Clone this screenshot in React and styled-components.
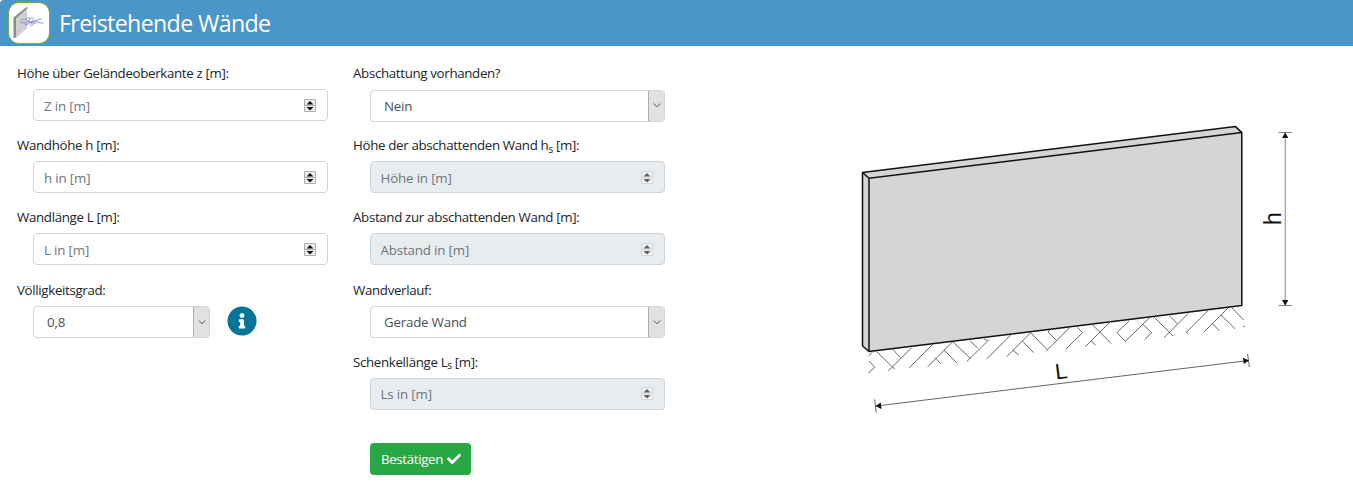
import React from "react";
import styled, { createGlobalStyle, css } from "styled-components";
import { FaCheck, FaInfoCircle } from "react-icons/fa";

const GlobalStyle = createGlobalStyle`
  *, *::before, *::after { box-sizing: border-box; }
  body {
    margin: 0;
    background: #fff;
    color: #212529;
    font-family: "Segoe UI", "Open Sans", "Noto Sans", sans-serif;
    font-size: 13.3px;
    line-height: 20px;
    letter-spacing: -0.33px;
  }
`;

const Page = styled.div`
  height: 504px;
  overflow: hidden;
`;

const Header = styled.header`
  display: flex;
  align-items: center;
  height: 46px;
  padding: 0 9px 1px 8px;
  gap: 9px;
  background: #4a96c9;
  border-top-left-radius: 4px;
`;

const LogoFrame = styled.span`
  display: flex;
  width: 42px;
  height: 42px;
  border: 1.5px solid #76b041;
  border-radius: 11px;
  background: #fff;
`;

const Title = styled.h1`
  margin: 1px 0 0;
  color: #fff;
  font-size: 23.2px;
  font-weight: 400;
  line-height: 32px;
  letter-spacing: -0.65px;
  white-space: nowrap;
`;

const Main = styled.main`
  display: flex;
`;

const Column = styled.section`
  display: flex;
  flex-direction: column;
  width: ${(p) => p.$width}px;
  padding: 17px 0 0 17px;
`;

const Field = styled.div`
  height: 72.2px;
  padding-left: ${(p) => p.$indent || 16}px;
`;

const Label = styled.label`
  display: block;
  height: 27px;
  margin-left: -${(p) => p.$indent || 16}px;
  white-space: nowrap;

  sub {
    position: relative;
    bottom: -0.25em;
    font-size: 75%;
    line-height: 0;
    vertical-align: baseline;
  }
`;

const Row = styled.div`
  display: flex;
  align-items: center;
  gap: 17px;
  margin-top: -0.4px;
`;

const controlBox = css`
  display: flex;
  align-items: center;
  width: ${(p) => p.$width || 295}px;
  height: 32px;
  border: 1px solid #ced4da;
  border-radius: 4px;
  background: #fff;
`;

const NumberBox = styled.div`
  ${controlBox}
  margin-top: -1px;
  padding: 0 11px 0 ${(p) => (p.$disabled ? 9.5 : 10)}px;
  background: ${(p) => (p.$disabled ? "#e9ecef" : "#fff")};
`;

const NumberInput = styled.input`
  flex: 1;
  min-width: 0;
  padding: 1px 0 0;
  border: 0;
  outline: 0;
  background: transparent;
  color: #495057;
  font: inherit;
  letter-spacing: -0.15px;

  &::placeholder {
    color: #6c757d;
    opacity: 1;
  }
`;

const Spinner = styled.svg`
  width: 12px;
  height: 13px;
  flex: none;
`;

const SelectBox = styled.div`
  ${controlBox}
  padding-left: 13px;
  overflow: hidden;
  color: #495057;
  letter-spacing: -0.2px;
`;

const SelectValue = styled.span`
  flex: 1;
`;

const SelectArrow = styled.span`
  display: flex;
  align-items: center;
  justify-content: center;
  width: 17px;
  height: 32px;
  margin: -1px -1px -1px 0;
  border: 1px solid #adadad;
  background: #e1e1e1;
`;

const InfoIcon = styled(FaInfoCircle)`
  width: 30px;
  height: 30px;
  margin-top: -2px;
  color: #057499;
`;

const Submit = styled.button`
  display: flex;
  align-items: center;
  gap: 4px;
  width: 101px;
  height: 32px;
  margin: 19px 0 0 17px;
  padding: 0 0 0 11px;
  border: 0;
  border-radius: 4px;
  background: #28a745;
  color: #fff;
  font: inherit;
  letter-spacing: -0.35px;
  white-space: nowrap;
`;

const Diagram = styled.svg`
  width: 460px;
  height: 310px;
  margin: 64px 0 0 173px;
  flex: none;
`;

function Logo() {
  return (
    <LogoFrame>
      <svg width="39" height="39" viewBox="0 0 39 39" fill="none">
        <path d="M5 15 18 5v20L7 35H5Z" fill="#cfcfcf" />
        <path d="M4.500 35.500V14.500L17.500 4l1.200 1L7 15.500v18.500Z" fill="#8c8c8c" />
        <g stroke="#8585d8" strokeWidth="0.9" strokeLinecap="round">
          <path d="M11 19c3 2 9 1 13-1 4-1 5 3 10 2" />
          <path d="M12 17c2-2 3 1 5-1s4-2 4 0-4 2-4 0" />
          <path d="M16 21c3 2 4-1 6-2s4 1 2 3-4-1-1-2" />
          <path d="M21 16c2-3 5 0 3 1M25 18c3 0 4-2 7-2M18 19c3-2 5 2 9 1" />
        </g>
      </svg>
    </LogoFrame>
  );
}

function NumberField({ label, placeholder, disabled, indent }) {
  const edge = disabled ? "#d5d7d9" : "#b0b0b0";
  const face = disabled ? "#eff0f1" : "#ececec";
  const arrow = disabled ? "#5e5e5e" : "#111";
  return (
    <Field $indent={indent}>
      <Label $indent={indent}>{label}</Label>
      <NumberBox $disabled={disabled}>
        <NumberInput placeholder={placeholder} disabled={disabled} />
        <Spinner viewBox="0 0 12 13">
          <path d="M.5.5h11v12H.5ZM.5 6.5h11" fill={face} stroke={edge} />
          <path d="M2.500 5.500 6 2l3.500 3.500ZM2.500 8 6 11.500 9.500 8Z" fill={arrow} />
        </Spinner>
      </NumberBox>
    </Field>
  );
}

function SelectField({ label, value, width, indent, children }) {
  return (
    <Field $indent={indent}>
      <Label $indent={indent}>{label}</Label>
      <Row>
        <SelectBox $width={width}>
          <SelectValue>{value}</SelectValue>
          <SelectArrow>
            <svg width="8" height="5" viewBox="0 0 8 5" fill="none">
              <path d="M.8.6 4 3.800 7.200.6" stroke="#505050" />
            </svg>
          </SelectArrow>
        </SelectBox>
        {children}
      </Row>
    </Field>
  );
}

function WallDiagram() {
  return (
    <Diagram viewBox="850 110 460 310" fill="none">
      <path
        d="M862.5 172.500 1235.500 126.600l6.300 6V305.600L869 351.500l-6.500-5.500Z"
        fill="#d5d5d5"
        stroke="#111"
        strokeWidth="1.5"
        strokeLinejoin="round"
      />
      <path d="M862.5 172.500 869 178.300 1241.800 132.600M869 178.300V351.500" stroke="#111" strokeWidth="1.5" />
      <g transform="translate(850 300) scale(.33333)" stroke="#4a4a4a" strokeWidth="2.5">
        <path d="M57 183 74 202 55 219M56 167 68 156M80 155 135 208M115 213 185 143M128 148 152 173M178 203 248 133" />
        <path d="M233 200 308 125 361 175M282 150 320 188M255 173 273 192M351 184 418 118M360 122 385 146M402 116 412 122" />
        <path d="M411 176 483 104M470 170 542 98 593 150M516 122 551 158M488 150 506 165M588 154 658 84M598 90 595 97 620 122M648 147 660 135" />
      </g>
      <g transform="translate(1070 290) scale(.33333)" stroke="#4a4a4a" strokeWidth="2.5">
        <path d="M0 165 38 128 22 112M46 170 118 98M68 105 124 161M64 153 77 166M178 92 141 128 166 154 240 82" />
        <path d="M218 103 245 128 224 149M253 82 309 138M282 143 355 70M298 77 322 101M355 132 349 127 413 63" />
        <path d="M402 126 474 54M453 75 495 116M427 101 448 122M486 54 521 90M519 111 524 109" />
      </g>
      <g stroke="#777" strokeWidth="0.9">
        <path d="M1285.200 133V306M1278.500 132.500h13.500M1278.500 305.500h13.500" />
        <path d="M876 406 1248 360.600M874.600 399.500 876.200 412.500M1247.600 354 1249.400 367" stroke="#555" />
      </g>
      <path d="M1285.200 132.500l-3.200 5.500h6.400ZM1285.200 305.500l-3.200-5.500h6.400ZM875.500 406l5.300-3.600.7 6.500ZM1249 360.500l-6-2.700.8 6.300Z" fill="#111" />
      <g fontFamily="Liberation Sans, sans-serif" fill="#111" letterSpacing="0">
        <text x="1056" y="379.5" fontSize="22" transform="rotate(-7 1056 379.5)">L</text>
        <text x="1280.5" y="225" fontSize="23" transform="rotate(-90 1280.5 225)">h</text>
      </g>
    </Diagram>
  );
}

export default function App() {
  return (
    <Page>
      <GlobalStyle />
      <Header>
        <Logo />
        <Title>Freistehende Wände</Title>
      </Header>
      <Main>
        <Column $width={336}>
          <NumberField label="Höhe über Geländeoberkante z [m]:" placeholder="Z in [m]" />
          <NumberField label="Wandhöhe h [m]:" placeholder="h in [m]" />
          <NumberField label="Wandlänge L [m]:" placeholder="L in [m]" />
          <SelectField label="Völligkeitsgrad:" value="0,8" width={177}>
            <InfoIcon />
          </SelectField>
        </Column>
        <Column $width={341}>
          <SelectField label="Abschattung vorhanden?" value="Nein" indent={17} />
          <NumberField label={<>Höhe der abschattenden Wand h<sub>s</sub> [m]:</>} placeholder="Höhe in [m]" indent={17} disabled />
          <NumberField label="Abstand zur abschattenden Wand [m]:" placeholder="Abstand in [m]" indent={17} disabled />
          <SelectField label="Wandverlauf:" value="Gerade Wand" indent={17} />
          <NumberField label={<>Schenkellänge L<sub>s</sub> [m]:</>} placeholder="Ls in [m]" indent={17} disabled />
          <Submit type="button">
            Bestätigen <FaCheck size={14} />
          </Submit>
        </Column>
        <WallDiagram />
      </Main>
    </Page>
  );
}
